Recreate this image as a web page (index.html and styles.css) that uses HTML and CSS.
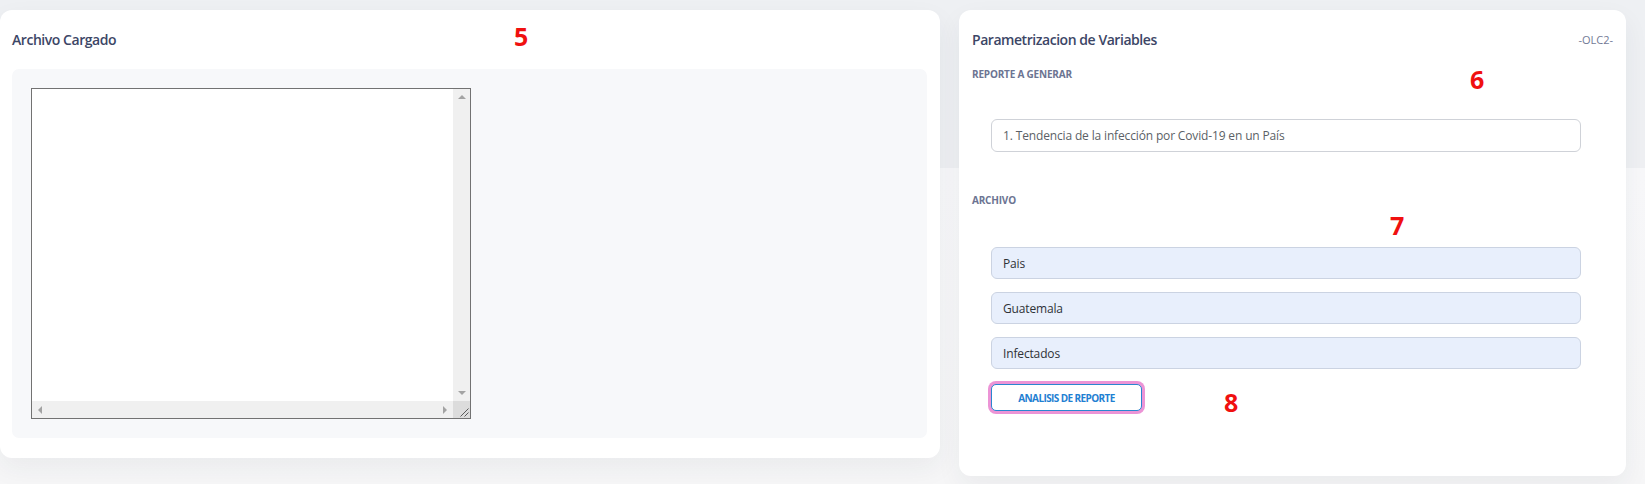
FILE: index.html
```html
<!DOCTYPE html>
<html lang="es">
<head>
<meta charset="utf-8">
<title>Parametrizacion</title>
<link rel="stylesheet" href="styles.css">
</head>
<body>
<div class="page">
  <section class="card card-file">
    <h2 class="card-title">Archivo Cargado</h2>
    <div class="file-box">
      <div class="log">
        <textarea class="log-input" wrap="off"></textarea>
        <div class="sb sb-v">
          <span class="arr arr-up"></span>
          <span class="arr arr-down"></span>
        </div>
        <div class="sb sb-h">
          <span class="arr arr-left"></span>
          <span class="arr arr-right"></span>
        </div>
        <div class="sb-corner">
          <svg width="17" height="17" viewBox="0 0 17 17" aria-hidden="true">
            <line x1="15.5" y1="7.5" x2="7.5" y2="15.5" stroke="#5a5a5a" stroke-width="1"/>
            <line x1="15.5" y1="11.5" x2="11.5" y2="15.5" stroke="#5a5a5a" stroke-width="1"/>
          </svg>
        </div>
      </div>
    </div>
    <span class="marker m5">5</span>
  </section>

  <section class="card card-params">
    <div class="card-head">
      <h2 class="card-title">Parametrizacion de Variables</h2>
      <span class="tag">-OLC2-</span>
    </div>
    <h3 class="label">REPORTE A GENERAR</h3>
    <div class="control control-select">1. Tendencia de la infección por Covid-19 en un País</div>
    <h3 class="label label-file">ARCHIVO</h3>
    <div class="fields">
      <div class="control control-field">Pais</div>
      <div class="control control-field">Guatemala</div>
      <div class="control control-field">Infectados</div>
    </div>
    <button class="btn" type="button">ANALISIS DE REPORTE</button>
    <span class="marker m6">6</span>
    <span class="marker m7">7</span>
    <span class="marker m8">8</span>
  </section>
</div>
</body>
</html>
```

FILE: styles.css
```css
html, body {
  margin: 0;
  padding: 0;
}

body {
  width: 1645px;
  height: 484px;
  overflow: hidden;
  font-family: "Open Sans", "Liberation Sans", sans-serif;
  background: linear-gradient(to bottom, #eef0f3 0, #eff0f3 168px, #f8f8fa 168px, #f6f6f7 100%);
}

.page {
  display: flex;
  align-items: flex-start;
  gap: 19px;
  padding: 10px 19px 0 0;
}

.card {
  position: relative;
  box-sizing: border-box;
  background: #ffffff;
  border-radius: 12px;
  box-shadow: 0 10px 26px rgba(40, 50, 70, 0.06);
}

.card-title {
  margin: 0;
  font-size: 14px;
  line-height: 20px;
  font-weight: 550;
  color: #3c4666;
  font-stretch: 90%;
  letter-spacing: -0.45px;
}

/* Left card */
.card-file {
  width: 940px;
  height: 448px;
  padding: 20px 13px 20px 12px;
}

.file-box {
  box-sizing: border-box;
  margin-top: 19px;
  height: 369px;
  padding: 19px;
  background: #f7f8fa;
  border-radius: 7px;
}

.log {
  box-sizing: border-box;
  display: grid;
  grid-template-columns: 1fr 17px;
  grid-template-rows: 1fr 17px;
  width: 440px;
  height: 331px;
  border: 1px solid #727272;
  background: #ffffff;
}

.log-input {
  display: block;
  width: 100%;
  height: 100%;
  margin: 0;
  padding: 0;
  border: 0;
  resize: none;
  outline: none;
  background: #ffffff;
}

.sb {
  display: flex;
  justify-content: space-between;
  align-items: center;
  background: #f0f0f0;
}

.sb-v {
  flex-direction: column;
  padding: 6px 0;
}

.sb-h {
  padding: 0 6px;
}

.arr {
  width: 0;
  height: 0;
  border-style: solid;
  border-color: transparent;
}

.arr-up {
  border-width: 0 4px 4px 4px;
  border-bottom-color: #a3a3a3;
}

.arr-down {
  border-width: 4px 4px 0 4px;
  border-top-color: #a3a3a3;
}

.arr-left {
  border-width: 4px 4px 4px 0;
  border-right-color: #a3a3a3;
}

.arr-right {
  border-width: 4px 0 4px 4px;
  border-left-color: #a3a3a3;
}

.sb-corner {
  background: #dcdcdc;
}

.sb-corner svg {
  display: block;
}

/* Right card */
.card-params {
  width: 667px;
  height: 466px;
  padding: 20px 13px 0 13px;
}

.card-head {
  display: flex;
  align-items: center;
  justify-content: space-between;
}

.tag {
  font-size: 11px;
  line-height: 20px;
  color: #727a96;
  font-stretch: 90%;
}

.label {
  margin: 17px 0 0;
  font-size: 10px;
  line-height: 14px;
  font-weight: 700;
  color: #6c7492;
  font-stretch: 92%;
  letter-spacing: -0.2px;
}

.label-file {
  margin-top: 41px;
}

.control {
  box-sizing: border-box;
  display: flex;
  align-items: center;
  margin-left: 19px;
  width: 590px;
  padding: 0 11px;
  border-radius: 6px;
  font-size: 12px;
  font-stretch: 88%;
  letter-spacing: -0.15px;
}

.control-select {
  margin-top: 38px;
  height: 33px;
  border: 1px solid #cfd2d8;
  background: #ffffff;
  color: #5b5f66;
}

.fields {
  display: flex;
  flex-direction: column;
  gap: 13px;
  margin-top: 40px;
}

.control-field {
  height: 32px;
  border: 1px solid #cbd3e2;
  background: #e8effc;
  color: #2f3237;
}

.btn {
  display: block;
  box-sizing: border-box;
  margin: 15px 0 0 19px;
  width: 151px;
  height: 27px;
  padding: 0;
  border: 1px solid #2b86d0;
  border-radius: 5px;
  background: #ffffff;
  color: #1f80d2;
  font-family: "Open Sans", "Liberation Sans", sans-serif;
  font-size: 10px;
  font-weight: 700;
  font-stretch: 92%;
  letter-spacing: -0.6px;
  box-shadow: 0 0 0 3px #ec94d6;
}

/* Annotation markers */
.marker {
  position: absolute;
  font-family: "Open Sans", "Liberation Sans", sans-serif;
  font-size: 25px;
  line-height: 1;
  font-weight: 700;
  color: #f01010;
}

.m5 { left: 514px; top: 14px; }
.m6 { left: 511px; top: 57px; }
.m7 { left: 431px; top: 203px; }
.m8 { left: 265px; top: 380px; }
```
